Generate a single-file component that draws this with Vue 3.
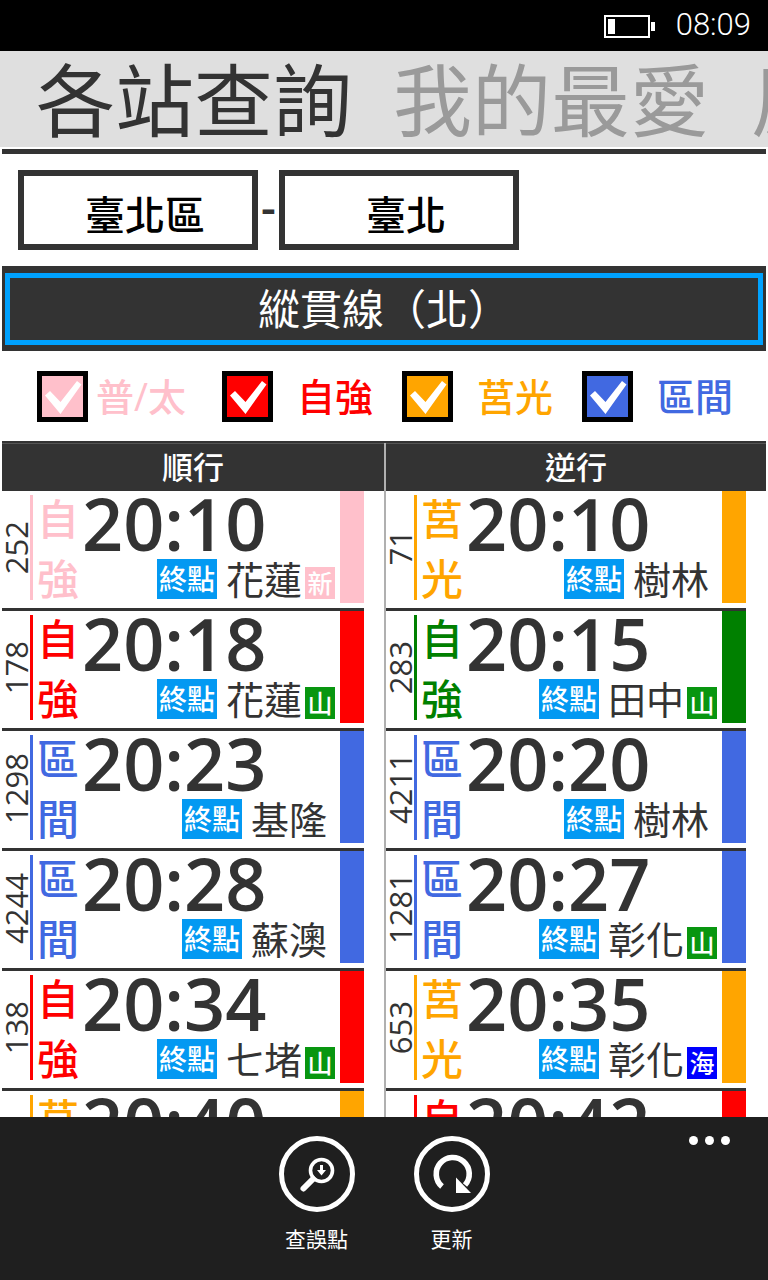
<script setup>
import { ref } from 'vue'

const tabs = ['各站查詢', '我的最愛', '反應']

const filters = ref([
  { id: 'local', label: '普/太', tone: 'pink', on: true },
  { id: 'tzechiang', label: '自強', tone: 'red', on: true },
  { id: 'chukuang', label: '莒光', tone: 'orange', on: true },
  { id: 'commuter', label: '區間', tone: 'blue', on: true },
])

const directions = [
  {
    name: '順行',
    trains: [
      { no: '252', type: '自強', tone: 'pink', time: '20:10', to: '花蓮', badge: '新', badgeTone: 'new' },
      { no: '178', type: '自強', tone: 'red', time: '20:18', to: '花蓮', badge: '山', badgeTone: 'mountain' },
      { no: '1298', type: '區間', tone: 'blue', time: '20:23', to: '基隆' },
      { no: '4244', type: '區間', tone: 'blue', time: '20:28', to: '蘇澳' },
      { no: '138', type: '自強', tone: 'red', time: '20:34', to: '七堵', badge: '山', badgeTone: 'mountain' },
      { no: '', type: '莒光', tone: 'orange', time: '20:40', to: '' },
    ],
  },
  {
    name: '逆行',
    trains: [
      { no: '71', type: '莒光', tone: 'orange', time: '20:10', to: '樹林' },
      { no: '283', type: '自強', tone: 'green', time: '20:15', to: '田中', badge: '山', badgeTone: 'mountain' },
      { no: '4211', type: '區間', tone: 'blue', time: '20:20', to: '樹林' },
      { no: '1281', type: '區間', tone: 'blue', time: '20:27', to: '彰化', badge: '山', badgeTone: 'mountain' },
      { no: '653', type: '莒光', tone: 'orange', time: '20:35', to: '彰化', badge: '海', badgeTone: 'sea' },
      { no: '', type: '自強', tone: 'red', time: '20:42', to: '' },
    ],
  },
]
</script>

<template>
  <div class="phone">
    <div class="status">
      <svg class="battery" viewBox="0 0 52 24" aria-hidden="true">
        <rect x="1" y="1" width="44" height="21" fill="none" stroke="#fff" stroke-width="2" />
        <rect x="4" y="4" width="7" height="15" fill="#fff" />
        <rect x="47" y="7" width="4" height="9" fill="#fff" />
      </svg>
      <time class="clock">08:09</time>
    </div>

    <nav class="pivot">
      <a v-for="(tab, i) in tabs" :key="tab" href="#" class="tab" :class="{ current: i === 0 }">{{ tab }}</a>
    </nav>

    <main class="content">
      <div class="station">
        <button type="button" class="picker">臺北區</button>
        <span class="dash">-</span>
        <button type="button" class="picker">臺北</button>
      </div>

      <div class="line-wrap">
        <button type="button" class="line-button">縱貫線（北）</button>
      </div>

      <div class="filters">
        <label v-for="f in filters" :key="f.id" class="filter" :class="f.tone">
          <span class="box">
            <input v-model="f.on" type="checkbox" class="tick" />
            <svg v-if="f.on" class="mark" viewBox="0 0 41 41" aria-hidden="true">
              <path d="M3 19.500 L8 15 L18.500 26 L35 5 L39.500 8.500 L18.500 38 Z" fill="#fff" />
            </svg>
          </span>
          <span class="filter-name">{{ f.label }}</span>
        </label>
      </div>

      <div class="board">
        <section v-for="d in directions" :key="d.name" class="direction">
          <h2 class="heading">{{ d.name }}</h2>
          <ul class="trains">
            <li v-for="t in d.trains" :key="t.time" class="train" :class="t.tone">
              <div class="no"><span>{{ t.no }}</span></div>
              <div class="rule"></div>
              <div class="type">
                <span v-for="c in t.type" :key="c">{{ c }}</span>
              </div>
              <div class="info">
                <time class="time">{{ t.time }}</time>
                <div v-if="t.to" class="dest">
                  <span class="tag">終點</span>
                  <span class="name">{{ t.to }}</span>
                  <span v-if="t.badge" class="badge" :class="t.badgeTone">{{ t.badge }}</span>
                </div>
              </div>
              <div class="bar"></div>
            </li>
          </ul>
        </section>
      </div>
    </main>

    <footer class="appbar">
      <button type="button" class="action">
        <svg class="icon" viewBox="0 0 76 76" aria-hidden="true">
          <circle cx="38" cy="38" r="35.5" fill="none" stroke="#fff" stroke-width="5" />
          <circle cx="42.500" cy="34.500" r="11" fill="none" stroke="#fff" stroke-width="3.600" />
          <path d="M34 43 L24.500 52.500" stroke="#fff" stroke-width="6" stroke-linecap="round" />
          <path d="M41 29 H44 V34 H47 L42.500 39.500 L38 34 H41 Z" fill="#fff" />
        </svg>
        <span>查誤點</span>
      </button>
      <button type="button" class="action">
        <svg class="icon" viewBox="0 0 76 76" aria-hidden="true">
          <circle cx="38" cy="38" r="35.5" fill="none" stroke="#fff" stroke-width="5" />
          <path d="M28 50.500 A16.500 16.500 0 1 1 51 49" fill="none" stroke="#fff" stroke-width="5.600" />
          <path d="M42 41.500 V57 H57 Z" fill="#fff" />
        </svg>
        <span>更新</span>
      </button>
      <button type="button" class="more" aria-label="更多">
        <i></i><i></i><i></i>
      </button>
    </footer>
  </div>
</template>

<style>
body {
  margin: 0;
}
</style>

<style scoped>
.phone {
  display: flex;
  flex-direction: column;
  height: 100vh;
  overflow: hidden;
  background: #fff;
  color: #333;
  font-family: "Open Sans", "Noto Sans CJK TC", sans-serif;
}

.phone * {
  box-sizing: border-box;
}

button {
  padding: 0;
  border: 0;
  border-radius: 0;
  background: none;
  color: inherit;
  font: inherit;
}

.pink { --tone: #ffc0cb; }
.red { --tone: #ff0000; }
.orange { --tone: #ffa500; }
.blue { --tone: #4169e1; }
.green { --tone: #008000; }

.status {
  display: flex;
  flex: none;
  align-items: center;
  justify-content: flex-end;
  gap: 20px;
  height: 51px;
  padding-right: 17px;
  background: #000;
  color: #fff;
}

.battery {
  width: 52px;
  height: 24px;
  margin-top: 3px;
}

.clock {
  padding-bottom: 2px;
  font-family: Roboto, sans-serif;
  font-size: 31px;
  font-weight: 300;
  line-height: 48px;
}

.pivot {
  display: flex;
  flex: none;
  gap: 41px;
  height: 96px;
  padding-left: 36px;
  overflow: hidden;
  background: #dfdfdf;
}

.tab {
  flex: none;
  color: #9a9a9a;
  font-size: 79px;
  line-height: 100px;
  text-decoration: none;
  white-space: nowrap;
}

.tab.current {
  color: #333;
}

.content {
  display: flex;
  flex: 1;
  flex-direction: column;
  min-height: 0;
  margin: 2px 2px 0;
  border-top: 5px solid #333;
  overflow: hidden;
}

.station {
  display: flex;
  flex: none;
  align-items: center;
  padding: 16px;
}

.picker {
  width: 240px;
  height: 80px;
  padding: 10px 0 0 14px;
  border: 6px solid #333;
  color: #000;
  font-size: 40px;
  font-weight: 500;
  line-height: 56px;
}

.dash {
  width: 21px;
  padding-bottom: 8px;
  font-size: 46px;
  font-weight: 600;
  line-height: 72px;
  text-align: center;
}

.line-wrap {
  flex: none;
  padding: 7px 3px 6px;
  background: #333;
}

.line-button {
  display: block;
  width: 100%;
  border: 5px solid #00a2ff;
  color: #fff;
  font-size: 42px;
  line-height: 62px;
}

.filters {
  display: grid;
  flex: none;
  grid-template-columns: 185fr 180fr 180fr 184fr;
  padding: 20px 0 19px 35px;
}

.filter {
  display: flex;
  align-items: center;
  gap: 24px;
  color: var(--tone);
  font-size: 38px;
  font-weight: 500;
  line-height: 48px;
  white-space: nowrap;
}

.filter:first-child {
  gap: 8px;
}

.filter-name {
  padding-bottom: 2px;
}

.box {
  display: grid;
  flex: none;
  width: 51px;
  height: 51px;
}

.tick {
  grid-area: 1 / 1;
  width: 51px;
  height: 51px;
  margin: 0;
  border: 5px solid #000;
  background: var(--tone);
  appearance: none;
}

.mark {
  grid-area: 1 / 1;
  width: 41px;
  height: 41px;
  margin: 5px;
  pointer-events: none;
}

.board {
  display: grid;
  grid-template-columns: 1fr 1fr;
  border-top: 2px solid #333;
}

.direction + .direction {
  border-left: 2px solid #b0b0b0;
}

.heading {
  margin: 0;
  border-top: 1px solid #555;
  background: #333;
  color: #fff;
  font-size: 31px;
  font-weight: 500;
  line-height: 47px;
  text-align: center;
}

.trains {
  margin: 0;
  padding: 0 20px 0 0;
  list-style: none;
}

.train {
  display: flex;
  border-bottom: 3px solid #333;
}

.no {
  display: flex;
  align-items: center;
  justify-content: center;
  width: 28px;
  height: 114px;
}

.no span {
  font-size: 31px;
  font-weight: 500;
  line-height: 28px;
  writing-mode: vertical-rl;
  transform: rotate(180deg);
}

.rule {
  width: 3px;
  margin: 4px 0 8px;
  background: var(--tone);
}

.type {
  display: flex;
  flex-direction: column;
  gap: 8px;
  width: 42px;
  margin-left: 4px;
  padding: 2px 0 3px;
  color: var(--tone);
  font-size: 42px;
  font-weight: 500;
  line-height: 52px;
}

.info {
  flex: 1;
  padding-left: 3px;
}

.time {
  display: block;
  height: 68px;
  font-size: 72px;
  font-weight: 600;
  line-height: 64px;
}

.dest {
  display: flex;
  align-items: flex-end;
  justify-content: flex-end;
  padding-right: 5px;
}

.tag {
  padding: 0 2px;
  background: #0399f2;
  color: #fff;
  font-size: 28px;
  font-weight: 500;
  line-height: 40px;
}

.name {
  margin-left: 9px;
  font-size: 38px;
  line-height: 40px;
}

.name:last-child {
  margin-right: 8px;
}

.badge {
  width: 30px;
  margin-left: 3px;
  color: #fff;
  font-size: 25px;
  font-weight: 500;
  line-height: 32px;
  text-align: center;
}

.new { background: #ffc0cb; }
.mountain { background: #089610; }
.sea { background: #0000ff; }

.bar {
  width: 24px;
  margin-bottom: 5px;
  background: var(--tone);
}

.appbar {
  position: relative;
  display: flex;
  flex: none;
  justify-content: center;
  padding: 19px 0 26px;
  background: #1f1f1f;
  color: #fff;
}

.action {
  display: flex;
  flex-direction: column;
  align-items: center;
  gap: 12px;
  width: 135px;
  font-size: 21px;
  line-height: 30px;
}

.icon {
  width: 76px;
  height: 76px;
}

.more {
  position: absolute;
  top: 19px;
  right: 38px;
  display: flex;
  gap: 7px;
}

.more i {
  width: 9px;
  height: 9px;
  border-radius: 50%;
  background: #fff;
}
</style>
